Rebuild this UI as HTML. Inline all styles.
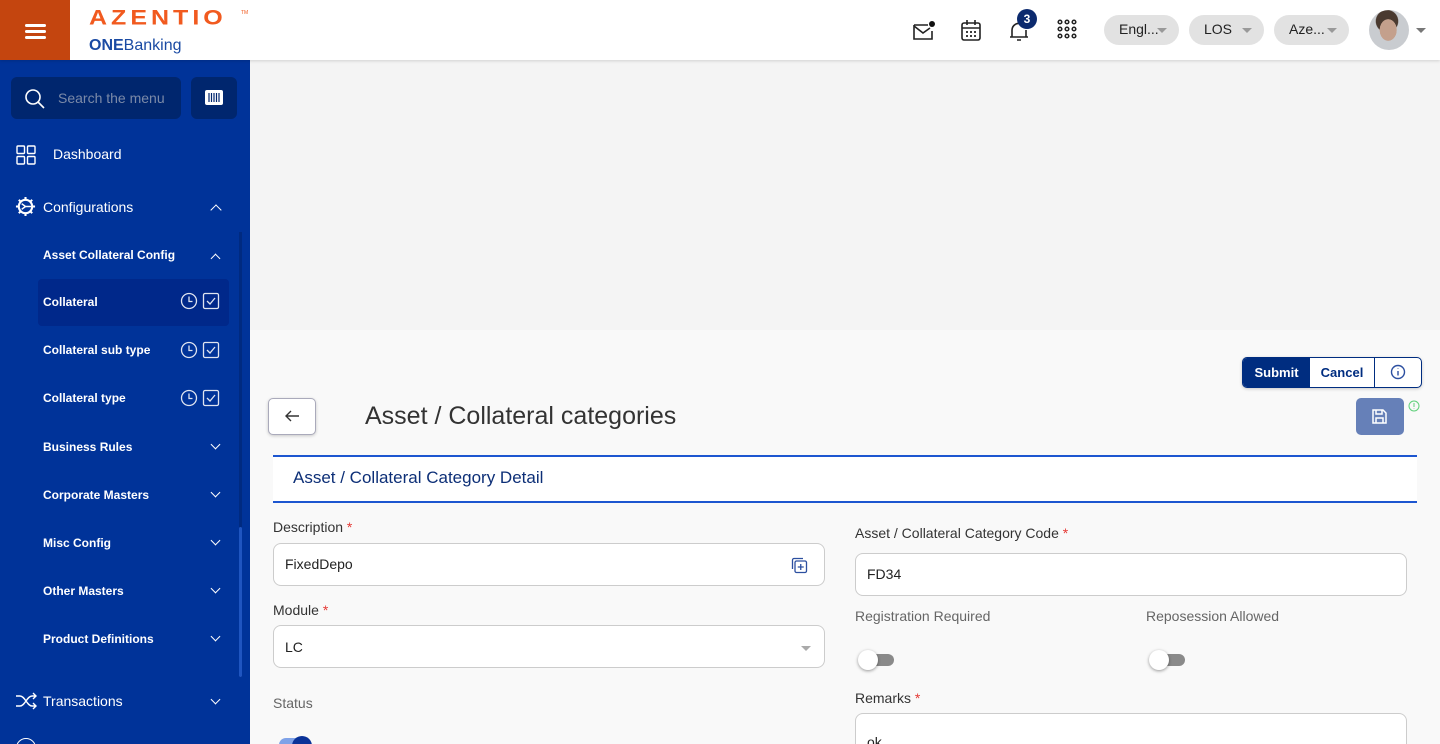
<!DOCTYPE html>
<html><head><meta charset="utf-8"><style>
*{box-sizing:border-box;margin:0;padding:0}
html,body{width:1440px;height:744px;overflow:hidden}
body{font-family:"Liberation Sans",Roboto,sans-serif;background:#f9f9f9;position:relative}
.abs{position:absolute}
.top{left:0;top:0;width:1440px;height:60px;background:#fff;box-shadow:0 1px 3px rgba(0,0,0,.15);z-index:2}
.burger{left:0;top:0;width:70px;height:60px;background:#c4450f}
.burger i{position:absolute;left:25px;width:21px;height:3px;background:#fff;border-radius:2px}
.side{left:0;top:60px;width:250px;height:684px;background:#003399;color:#fff;overflow:hidden}
.item{position:absolute;font-size:12px;font-weight:bold;color:#fff}
.chev{position:absolute;left:212px;width:8px;height:8px;border-left:1.6px solid #fff;border-top:1.6px solid #fff}
.up{transform:rotate(45deg)}
.down{transform:rotate(225deg)}
.pill{position:absolute;top:15px;height:30px;background:#e2e2e2;border-radius:15px;font-size:14px;color:#222;padding:6px 0 0 15px}
.tri{position:absolute;width:0;height:0;border-left:5px solid transparent;border-right:5px solid transparent;border-top:5px solid #999}
.lbl{position:absolute;font-size:14px;color:#333}
.lbl b{color:#e53935;font-weight:normal}
.inp{position:absolute;background:#fff;border:1px solid #ccc;border-radius:8px;font-size:14px;color:#222;padding:12px 0 0 11px}
.tog{position:absolute;width:36px;height:22px}
.tog .t{position:absolute;left:4px;top:5px;width:32px;height:12px;border-radius:6px;background:#8a8a8a}
.tog .k{position:absolute;left:0;top:1px;width:20px;height:20px;border-radius:50%;background:#fff;box-shadow:0 1px 3px rgba(0,0,0,.4)}
</style></head><body>
<div class="abs top">
 <div class="abs burger"><i style="top:24px"></i><i style="top:30px"></i><i style="top:36px"></i></div>
 <div class="abs" style="left:89px;top:6px;font-size:25px;font-weight:900;color:#f15a1f;letter-spacing:4px;font-family:'Liberation Sans',sans-serif;transform:scaleY(0.85);transform-origin:top left">AZENTIO</div>
 <div class="abs" style="left:241px;top:10px;font-size:5px;color:#f15a1f">TM</div>
 <div class="abs" style="left:89px;top:37px;font-size:16px;color:#1a4aa3"><b>ONE</b>Banking</div>
 <svg class="abs" style="left:912px;top:20px" width="24" height="22" viewBox="0 0 24 22" fill="none" stroke="#222" stroke-width="1.6"><path d="M2 5h14M2 5v14h18V11"/><path d="M2 6l9 7 7-5"/><circle cx="20" cy="4" r="3" fill="#111" stroke="none"/></svg>
 <svg class="abs" style="left:960px;top:19px" width="22" height="23" viewBox="0 0 22 23" fill="none" stroke="#222" stroke-width="1.6"><rect x="2" y="4" width="18" height="17" rx="2"/><path d="M2 9h18M7 1v5M15 1v5"/><path d="M6 13h2M10 13h2M14 13h2M6 17h2M10 17h2M14 17h2" stroke-width="1.8"/></svg>
 <svg class="abs" style="left:1008px;top:18px" width="22" height="26" viewBox="0 0 22 26" fill="none" stroke="#222" stroke-width="1.6"><path d="M4 19V12a7 7 0 0 1 10-6M18 12v7M2 19h18M9 22h4"/></svg>
 <div class="abs" style="left:1017px;top:9px;width:20px;height:20px;border-radius:50%;background:#0c2a6e;color:#fff;font-size:12px;font-weight:bold;text-align:center;line-height:20px">3</div>
 <svg class="abs" style="left:1057px;top:19px" width="20" height="20" viewBox="0 0 20 20" fill="none" stroke="#222" stroke-width="1.5"><circle cx="3" cy="3" r="1.8"/><circle cx="10" cy="3" r="1.8"/><circle cx="17" cy="3" r="1.8"/><circle cx="3" cy="10" r="1.8"/><circle cx="10" cy="10" r="1.8"/><circle cx="17" cy="10" r="1.8"/><circle cx="3" cy="17" r="1.8"/><circle cx="10" cy="17" r="1.8"/><circle cx="17" cy="17" r="1.8"/></svg>
 <div class="pill" style="left:1104px;width:75px">Engl...<span class="tri" style="left:53px;top:13px"></span></div>
 <div class="pill" style="left:1189px;width:75px">LOS<span class="tri" style="left:53px;top:13px"></span></div>
 <div class="pill" style="left:1274px;width:75px">Aze...<span class="tri" style="left:53px;top:13px"></span></div>
 <div class="abs" style="left:1369px;top:10px;width:40px;height:40px;border-radius:50%;background:radial-gradient(ellipse 30% 38% at 48% 50%,#c4a08c 0 70%,transparent 72%),radial-gradient(circle at 45% 28%,#4a3a30 0 30%,transparent 32%),#c9ccd0"></div>
 <span class="tri" style="left:1416px;top:28px;border-top-color:#777"></span>
</div>

<div class="abs side">
 <div class="abs" style="left:11px;top:17px;width:170px;height:42px;background:#00266e;border-radius:6px"></div>
 <svg class="abs" style="left:24px;top:28px" width="22" height="22" viewBox="0 0 22 22" fill="none" stroke="#fff" stroke-width="1.6"><circle cx="9" cy="9" r="7"/><path d="M14 14l6 6"/></svg>
 <div class="abs" style="left:58px;top:30px;font-size:14px;color:#7b8aa8">Search the menu</div>
 <div class="abs" style="left:191px;top:17px;width:46px;height:42px;background:#00266e;border-radius:6px"></div>
 <svg class="abs" style="left:205px;top:30px" width="18" height="15" viewBox="0 0 18 15"><rect width="18" height="15" rx="2" fill="#fff"/><path d="M4 3v9M6.5 3v9M9 3v9M11.5 3v9M14 3v9" stroke="#00266e" stroke-width="1.2"/></svg>
 <svg class="abs" style="left:16px;top:85px" width="20" height="20" viewBox="0 0 20 20" fill="none" stroke="#fff" stroke-width="1.4"><rect x="1" y="1" width="7.5" height="7.5" rx="1"/><rect x="11.5" y="1" width="7.5" height="7.5" rx="1"/><rect x="1" y="11.5" width="7.5" height="7.5" rx="1"/><rect x="11.5" y="11.5" width="7.5" height="7.5" rx="1"/></svg>
 <div class="item" style="left:53px;top:86px;font-size:14px;font-weight:normal">Dashboard</div>
 <svg class="abs" style="left:15px;top:136px" width="21" height="21" viewBox="0 0 22 22" fill="none" stroke="#fff" stroke-width="2.2"><circle cx="11" cy="11" r="7"/><path d="M11 1v3M11 18v3M1 11h3M18 11h3M4 4l2 2M16 16l2 2M4 18l2-2M16 6l2-2" /><path d="M11 11l-4-3M11 11h6M11 11l-4 3" stroke-width="1.5"/></svg>
 <div class="item" style="left:43px;top:139px;font-size:14px;font-weight:normal">Configurations</div>
 <div class="chev up" style="top:146px"></div>
 <div class="item" style="left:43px;top:188px">Asset Collateral Config</div>
 <div class="chev up" style="top:195px;width:7px;height:7px"></div>
 <div class="abs" style="left:38px;top:219px;width:191px;height:47px;background:#00288a;border-radius:4px"></div>
 <div class="item" style="left:43px;top:235px">Collateral</div>
 <div class="item" style="left:43px;top:283px">Collateral sub type</div>
 <div class="item" style="left:43px;top:331px">Collateral type</div>
 <svg class="abs" style="left:180px;top:232px" width="40" height="18" viewBox="0 0 40 18" fill="none" stroke="#dfe4f0" stroke-width="1.3"><circle cx="9" cy="9" r="7.5"/><path d="M9 4.5V9.5h3.5"/><rect x="23.5" y="1.5" width="15" height="15" rx="1.5"/><path d="M27 9l3 3 5-6"/></svg>
 <svg class="abs" style="left:180px;top:281px" width="40" height="18" viewBox="0 0 40 18" fill="none" stroke="#dfe4f0" stroke-width="1.3"><circle cx="9" cy="9" r="7.5"/><path d="M9 4.5V9.5h3.5"/><rect x="23.5" y="1.5" width="15" height="15" rx="1.5"/><path d="M27 9l3 3 5-6"/></svg>
 <svg class="abs" style="left:180px;top:329px" width="40" height="18" viewBox="0 0 40 18" fill="none" stroke="#dfe4f0" stroke-width="1.3"><circle cx="9" cy="9" r="7.5"/><path d="M9 4.5V9.5h3.5"/><rect x="23.5" y="1.5" width="15" height="15" rx="1.5"/><path d="M27 9l3 3 5-6"/></svg>
 <div class="item" style="left:43px;top:380px">Business Rules</div><div class="chev down" style="top:381px;width:7px;height:7px"></div>
 <div class="item" style="left:43px;top:428px">Corporate Masters</div><div class="chev down" style="top:429px;width:7px;height:7px"></div>
 <div class="item" style="left:43px;top:476px">Misc Config</div><div class="chev down" style="top:477px;width:7px;height:7px"></div>
 <div class="item" style="left:43px;top:524px">Other Masters</div><div class="chev down" style="top:525px;width:7px;height:7px"></div>
 <div class="item" style="left:43px;top:572px">Product Definitions</div><div class="chev down" style="top:573px;width:7px;height:7px"></div>
 <div class="abs" style="left:239px;top:172px;width:3px;height:445px;background:#002a80"></div>
 <div class="abs" style="left:239px;top:467px;width:3px;height:150px;background:#1f55c0;border-radius:2px"></div>
 <svg class="abs" style="left:15px;top:632px" width="22" height="18" viewBox="0 0 22 18" fill="none" stroke="#fff" stroke-width="1.4"><path d="M1 4h4c5 0 7 10 12 10h4M1 14h4c5 0 7-10 12-10h4M18 1l3 3-3 3M18 11l3 3-3 3"/></svg>
 <div class="item" style="left:43px;top:633px;font-size:14px;font-weight:normal">Transactions</div>
 <div class="chev down" style="top:636px;width:7px;height:7px"></div>
 <div class="abs" style="left:16px;top:678px;width:20px;height:20px;border:1.5px solid #fff;border-radius:50%"></div>
</div>

<div class="abs" style="left:250px;top:60px;width:1190px;height:270px;background:#f4f4f4"></div>

<div class="abs" style="left:1242px;top:357px;width:180px;height:31px;border:1.5px solid #002d80;border-radius:5px;background:#fff;overflow:hidden;box-shadow:0 1px 3px rgba(0,0,0,.2)">
 <div class="abs" style="left:0;top:0;width:67px;height:31px;background:#002d80;color:#fff;font-size:13px;font-weight:bold;text-align:center;line-height:29px">Submit</div>
 <div class="abs" style="left:67px;top:0;width:65px;height:31px;color:#002d80;font-size:13px;font-weight:bold;text-align:center;line-height:29px;border-right:1.5px solid #002d80">Cancel</div>
 <svg class="abs" style="left:147px;top:6px" width="16" height="16" viewBox="0 0 16 16" fill="none" stroke="#2c4fa0" stroke-width="1.4"><circle cx="8" cy="8" r="6.5"/><path d="M8 7v4.5M8 4.5v.5"/></svg>
</div>
<div class="abs" style="left:1356px;top:398px;width:48px;height:37px;background:#6680b8;border-radius:5px"></div>
<svg class="abs" style="left:1372px;top:409px" width="15" height="15" viewBox="0 0 15 15" fill="none" stroke="#fff" stroke-width="1.5"><path d="M1 1h10l3 3v10H1z"/><path d="M4 1v4h6V1M4 14V9h7v5"/></svg>
<svg class="abs" style="left:1408px;top:400px" width="12" height="12" viewBox="0 0 12 12" fill="none" stroke="#5fd07a" stroke-width="1"><circle cx="6" cy="6" r="5"/><path d="M6 3v4M6 8.5v.5"/></svg>

<div class="abs" style="left:268px;top:398px;width:48px;height:37px;background:#fff;border:1px solid #aab;border-radius:5px;box-shadow:0 1px 3px rgba(0,0,0,.2)"></div>
<svg class="abs" style="left:284px;top:409px" width="16" height="14" viewBox="0 0 16 14" fill="none" stroke="#333" stroke-width="1.4"><path d="M15 7H2M7 2L2 7l5 5"/></svg>
<div class="abs" style="left:365px;top:402px;font-size:25px;color:#333">Asset / Collateral categories</div>

<div class="abs" style="left:273px;top:455px;width:1144px;height:48px;background:#fff;border-top:2px solid #1d56d0;border-bottom:2px solid #1d56d0"></div>
<div class="abs" style="left:293px;top:468px;font-size:17px;color:#0d2f77">Asset / Collateral Category Detail</div>

<div class="lbl" style="left:273px;top:519px">Description <b>*</b></div>
<div class="inp" style="left:273px;top:543px;width:552px;height:43px">FixedDepo</div>
<svg class="abs" style="left:791px;top:557px" width="17" height="17" viewBox="0 0 17 17" fill="none" stroke="#2c4fa0" stroke-width="1.3"><path d="M1.5 12V3a1.5 1.5 0 0 1 1.5-1.5h9"/><rect x="4" y="4" width="11.5" height="11.5" rx="1.5"/><path d="M9.75 7v6M6.75 10h6"/></svg>
<div class="lbl" style="left:273px;top:602px">Module <b>*</b></div>
<div class="inp" style="left:273px;top:625px;width:552px;height:43px;padding-top:13px">LC</div>
<span class="tri" style="left:801px;top:646px;border-top-color:#aaa"></span>
<div class="lbl" style="left:273px;top:695px;color:#666">Status</div>
<div class="abs" style="left:279px;top:738px;width:32px;height:14px;border-radius:7px;background:#7fa2e8"></div>
<div class="abs" style="left:292px;top:736px;width:20px;height:20px;border-radius:50%;background:#0a3298"></div>

<div class="lbl" style="left:855px;top:525px">Asset / Collateral Category Code <b>*</b></div>
<div class="inp" style="left:855px;top:553px;width:552px;height:43px">FD34</div>
<div class="lbl" style="left:855px;top:608px;color:#666">Registration Required</div>
<div class="lbl" style="left:1146px;top:608px;color:#666">Reposession Allowed</div>
<div class="tog" style="left:858px;top:649px"><div class="t"></div><div class="k"></div></div>
<div class="tog" style="left:1149px;top:649px"><div class="t"></div><div class="k"></div></div>
<div class="lbl" style="left:855px;top:690px">Remarks <b>*</b></div>
<div class="inp" style="left:855px;top:713px;width:552px;height:60px;padding-top:20px">ok</div>
</body></html>
